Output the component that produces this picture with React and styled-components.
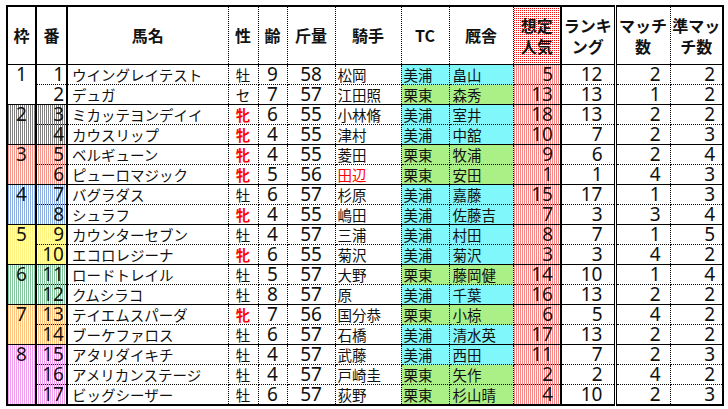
import React from 'react';
import styled, { createGlobalStyle, css } from 'styled-components';

const GlobalStyle = createGlobalStyle`
  body {
    margin: 0;
    background: #fff;
    font-family: "Noto Sans CJK JP", sans-serif;
    color: #111;
  }
`;

// Excel-like pattern fills, pinned to the viewport so the 1px dots stay crisp
const dots = c => css`
  background: linear-gradient(90deg, transparent 1px, #fff 1px) 0 0 / 2px 2px fixed,
    linear-gradient(transparent 1px, #fff 1px) 0 0 / 2px 2px fixed, ${c};
`;

const checker = (a, b) => css`
  background: repeating-conic-gradient(${a} 0 25%, ${b} 0 50%) 0 0 / 2px 2px fixed;
`;

const frameFill = {
  1: css`background: #fff;`,
  2: dots('#000'),
  3: dots('#e8301c'),
  4: dots('#1a5ec0'),
  5: dots('#ffe800'),
  6: dots('#0b8a3c'),
  7: dots('#ff8a00'),
  8: dots('#e23ee2')
};

const tcFill = {
  美浦: checker('#00eef6', '#fff'),
  栗東: checker('#6ee03c', '#e6ffd0')
};

const popFill = dots('#ee1010');

const rightBorder = {
  thick: '2px solid #000',
  double: '3px double #000',
  dot: '1px dotted #000',
  none: 'none'
};

const Wrap = styled.div`
  padding: 5px 0 0 6px;
`;

const Table = styled.table`
  border-collapse: collapse;
  table-layout: fixed;
  width: 716px;
  border: 2px solid #000;
`;

const Th = styled.th`
  height: 57px;
  padding: 0;
  font-size: 16px;
  font-weight: 700;
  line-height: 21px;
  text-align: center;
  color: #111;
  border-right: ${p => rightBorder[p.$r || 'dot']};
  border-bottom: 1px solid #000;
  ${p => p.$pop && popFill}
`;

const Td = styled.td`
  height: 19px;
  padding: 0 ${p => p.$pr ?? 2}px 0 ${p => p.$pl ?? 2}px;
  font-size: 14.5px;
  line-height: 19px;
  white-space: nowrap;
  text-align: ${p => p.$align || 'left'};
  vertical-align: middle;
  color: ${p => (p.$red ? '#ff0000' : '#111')};
  font-weight: ${p => (p.$bold ? 700 : 400)};
  border-right: ${p => rightBorder[p.$r || 'dot']};
  border-bottom: 1px ${p => (p.$end ? 'solid' : 'dotted')} #000;
  ${p =>
    p.$num &&
    css`
      font-family: "Noto Sans", "Noto Sans CJK JP", sans-serif;
      font-size: 19px;
    `}
  ${p => p.$fill}
`;

const FrameTd = styled(Td)`
  vertical-align: top;
  text-align: center;
  border-bottom: 1px solid #000;
`;

const widths = [29, 31, 161, 30, 29, 48, 66, 48, 64, 48, 54, 55, 53];

const rows = [
  [1, 1, 'ウイングレイテスト', '牡', 9, 58, '松岡', '美浦', '畠山', 5, 12, 2, 2],
  [1, 2, 'デュガ', 'セ', 7, 57, '江田照', '栗東', '森秀', 13, 13, 1, 2],
  [2, 3, 'ミカッテヨンデイイ', '牝', 6, 55, '小林脩', '美浦', '室井', 18, 13, 2, 2],
  [2, 4, 'カウスリップ', '牝', 4, 55, '津村', '美浦', '中舘', 10, 7, 2, 3],
  [3, 5, 'ベルギューン', '牝', 4, 55, '菱田', '栗東', '牧浦', 9, 6, 2, 4],
  [3, 6, 'ピューロマジック', '牝', 5, 56, '田辺', '栗東', '安田', 1, 1, 4, 3],
  [4, 7, 'バグラダス', '牡', 6, 57, '杉原', '美浦', '嘉藤', 15, 17, 1, 3],
  [4, 8, 'シュラフ', '牝', 4, 55, '嶋田', '美浦', '佐藤吉', 7, 3, 3, 4],
  [5, 9, 'カウンターセブン', '牡', 4, 57, '三浦', '美浦', '村田', 8, 7, 1, 5],
  [5, 10, 'エコロレジーナ', '牝', 6, 55, '菊沢', '美浦', '菊沢', 3, 3, 4, 2],
  [6, 11, 'ロードトレイル', '牡', 5, 57, '大野', '栗東', '藤岡健', 14, 10, 1, 4],
  [6, 12, 'クムシラコ', '牡', 8, 57, '原', '美浦', '千葉', 16, 13, 2, 2],
  [7, 13, 'テイエムスパーダ', '牝', 7, 56, '国分恭', '栗東', '小椋', 6, 5, 4, 2],
  [7, 14, 'ブーケファロス', '牡', 6, 57, '石橋', '美浦', '清水英', 17, 13, 2, 2],
  [8, 15, 'アタリダイキチ', '牡', 4, 57, '武藤', '美浦', '西田', 11, 7, 2, 3],
  [8, 16, 'アメリカンステージ', '牡', 4, 57, '戸崎圭', '栗東', '矢作', 2, 2, 4, 2],
  [8, 17, 'ビッグシーザー', '牡', 6, 57, '荻野', '栗東', '杉山晴', 4, 10, 2, 3]
];

// jockeys shown in red
const redJockeys = ['田辺'];

const App = () => (
  <Wrap>
    <GlobalStyle />
    <Table>
      <colgroup>
        {widths.map((w, i) => (
          <col key={i} style={{ width: w }} />
        ))}
      </colgroup>
      <thead>
        <tr>
          <Th $r='thick'>枠</Th>
          <Th $r='thick'>番</Th>
          <Th>馬名</Th>
          <Th>性</Th>
          <Th>齢</Th>
          <Th>斤量</Th>
          <Th>騎手</Th>
          <Th>TC</Th>
          <Th>厩舎</Th>
          <Th $pop $r='thick'>想定<br />人気</Th>
          <Th $r='double'>ランキ<br />ング</Th>
          <Th>マッチ<br />数</Th>
          <Th $r='none'>準マッ<br />チ数</Th>
        </tr>
      </thead>
      <tbody>
        {rows.map((r, i) => {
          const [waku, ban, name, sex, age, kin, jockey, tc, stable, pop, rank, match, semi] = r;
          const first = i === 0 || rows[i - 1][0] !== waku;
          const end = i === rows.length - 1 || rows[i + 1][0] !== waku;
          const span = rows.filter(x => x[0] === waku).length;
          return (
            <tr key={ban}>
              {first && (
                <FrameTd $num $r='thick' rowSpan={span} $fill={frameFill[waku]}>
                  {waku}
                </FrameTd>
              )}
              <Td $num $end={end} $r='thick' $align='right' $fill={frameFill[waku]}>
                {ban}
              </Td>
              <Td $end={end} $pl={4}>{name}</Td>
              <Td $end={end} $align='center' $red={sex === '牝'} $bold={sex === '牝'}>
                {sex}
              </Td>
              <Td $num $end={end} $align='center'>{age}</Td>
              <Td $num $end={end} $align='center'>{kin}</Td>
              <Td $end={end} $red={redJockeys.includes(jockey)}>{jockey}</Td>
              <Td $end={end} $fill={tcFill[tc]}>{tc}</Td>
              <Td $end={end} $pl={3} $fill={tcFill[tc]}>{stable}</Td>
              <Td $num $end={end} $r='thick' $align='right' $pr={7} $fill={popFill}>
                {pop}
              </Td>
              <Td $num $end={end} $r='double' $align='right' $pr={11}>{rank}</Td>
              <Td $num $end={end} $align='right' $pr={9}>{match}</Td>
              <Td $num $end={end} $r='none' $align='right' $pr={7}>{semi}</Td>
            </tr>
          );
        })}
      </tbody>
    </Table>
  </Wrap>
);

export default App;
